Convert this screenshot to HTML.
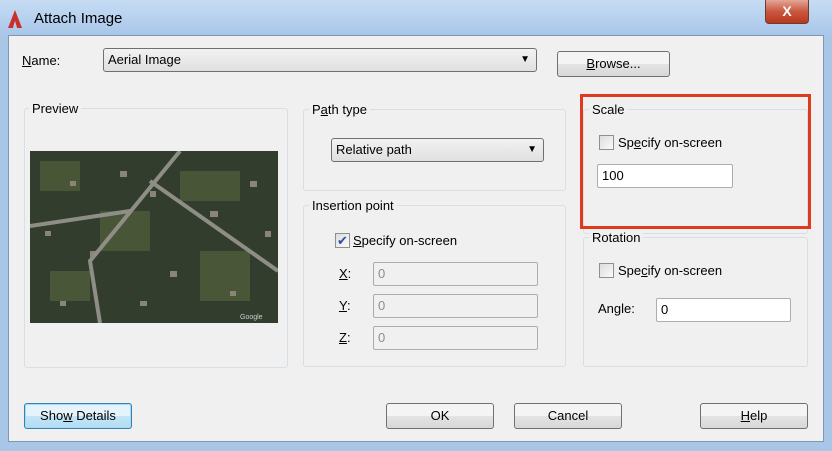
<!DOCTYPE html><html><head><style>
*{box-sizing:border-box}body{margin:0;width:832px;height:451px;overflow:hidden;background:#a9c6e6;font-family:"Liberation Sans",sans-serif;font-size:13px;color:#000;position:relative}
.a{position:absolute}
.title{left:0;top:0;width:832px;height:36px;background:linear-gradient(#c6dcf3,#b4cfee 60%,#a8c6e8)}
.inner{left:8px;top:35px;width:816px;height:407px;background:#f0f0f0;border:1px solid #7e98b6}
.grp{border:1px solid #d5dfe5;border-radius:3px}
.lbl{background:#f0f0f0;padding:0 3px}
.btn{border:1px solid #707070;border-radius:3px;background:linear-gradient(#f4f4f4 50%,#e4e4e4 50%,#d8d8d8);text-align:center;line-height:23px}
.cb{width:15px;height:15px;border:1px solid #8f8f8f;background:linear-gradient(135deg,#dcdcdc,#fbfbfb)}
.tb{background:#fff;border:1px solid #abadb3;border-radius:2px;padding-left:4px;line-height:26px}
.dis{background:#f0f0f0;border:1px solid #abadb3;color:#8d8d8d;border-radius:2px;padding-left:4px;line-height:26px}
.combo{border:1px solid #707070;border-radius:3px;background:linear-gradient(#f2f2f2,#e0e0e0);padding-left:4px}
u{text-decoration:underline}
</style></head><body>
<div class="a title"></div>
<div class="a" style="left:8px;top:10px;width:14px;height:18px;background:#c8302c;clip-path:polygon(50% 0,100% 100%,65% 100%,50% 60%,35% 100%,0 100%)"></div>
<div class="a" style="left:34px;top:10px;font-size:15px">Attach Image</div>
<div class="a" style="left:765px;top:0;width:44px;height:24px;border:1px solid #6d3a35;border-top:0;border-radius:0 0 4px 4px;background:linear-gradient(#e4a595,#c9573f 50%,#b8381e);color:#fff;font-weight:bold;text-align:center;line-height:22px;font-size:14px">X</div>
<div class="a inner"></div>
<div class="a" style="left:22px;top:53px"><u>N</u>ame:</div>
<div class="a combo" style="left:103px;top:48px;width:434px;height:24px;line-height:22px">Aerial Image<span style="position:absolute;right:6px;font-size:10px">▼</span></div>
<div class="a btn" style="left:557px;top:51px;width:113px;height:26px"><u>B</u>rowse...</div>

<div class="a grp" style="left:24px;top:108px;width:264px;height:260px"></div>
<div class="a lbl" style="left:29px;top:101px">Preview</div>
<svg class="a" style="left:30px;top:151px" width="248" height="172"><rect width="248" height="172" fill="#333d2e"/>
<g fill="#4f5c3a" opacity=".8"><rect x="10" y="10" width="40" height="30"/><rect x="70" y="60" width="50" height="40"/><rect x="150" y="20" width="60" height="30"/><rect x="170" y="100" width="50" height="50"/><rect x="20" y="120" width="40" height="30"/></g>
<g fill="#8b8478"><rect x="40" y="30" width="6" height="5"/><rect x="90" y="20" width="7" height="6"/><rect x="120" y="40" width="6" height="6"/><rect x="180" y="60" width="8" height="6"/><rect x="60" y="100" width="6" height="6"/><rect x="140" y="120" width="7" height="6"/><rect x="200" y="140" width="6" height="5"/><rect x="220" y="30" width="7" height="6"/><rect x="30" y="150" width="6" height="5"/><rect x="15" y="80" width="6" height="5"/><rect x="110" y="150" width="7" height="5"/><rect x="235" y="80" width="6" height="6"/></g>
<path d="M150 0 L60 110 L70 172 M0 75 L100 60 M120 30 L248 120" stroke="#8e8e86" stroke-width="4" fill="none"/>
<text x="210" y="168" font-size="7" fill="#ccc">Google</text></svg>

<div class="a grp" style="left:303px;top:109px;width:263px;height:82px"></div>
<div class="a lbl" style="left:309px;top:102px">P<u>a</u>th type</div>
<div class="a combo" style="left:331px;top:138px;width:213px;height:24px;line-height:22px">Relative path<span style="position:absolute;right:6px;font-size:10px">▼</span></div>

<div class="a grp" style="left:303px;top:205px;width:263px;height:162px"></div>
<div class="a lbl" style="left:309px;top:198px">Insertion point</div>
<div class="a cb" style="left:335px;top:233px;color:#2a4f9e;font-size:13px;line-height:13px;text-align:center">✔</div>
<div class="a" style="left:353px;top:233px"><u>S</u>pecify on-screen</div>
<div class="a" style="left:339px;top:266px"><u>X</u>:</div><div class="a dis" style="left:373px;top:262px;width:165px;height:24px;line-height:22px">0</div>
<div class="a" style="left:339px;top:298px"><u>Y</u>:</div><div class="a dis" style="left:373px;top:294px;width:165px;height:24px;line-height:22px">0</div>
<div class="a" style="left:339px;top:330px"><u>Z</u>:</div><div class="a dis" style="left:373px;top:326px;width:165px;height:24px;line-height:22px">0</div>

<div class="a grp" style="left:583px;top:109px;width:225px;height:125px"></div>
<div class="a lbl" style="left:589px;top:102px">Scale</div>
<div class="a" style="left:580px;top:94px;width:231px;height:135px;border:3px solid #e03a1e"></div>
<div class="a cb" style="left:599px;top:135px"></div>
<div class="a" style="left:618px;top:135px">Sp<u>e</u>cify on-screen</div>
<div class="a tb" style="left:597px;top:164px;width:136px;height:24px;line-height:22px">100</div>

<div class="a grp" style="left:583px;top:237px;width:225px;height:130px"></div>
<div class="a lbl" style="left:589px;top:230px">Rotation</div>
<div class="a cb" style="left:599px;top:263px"></div>
<div class="a" style="left:618px;top:263px">Spe<u>c</u>ify on-screen</div>
<div class="a" style="left:598px;top:301px">Angle:</div>
<div class="a tb" style="left:656px;top:298px;width:135px;height:24px;line-height:22px">0</div>

<div class="a btn" style="left:24px;top:403px;width:108px;height:26px;border-color:#3c7fb1;box-shadow:inset 0 0 0 1px #9fdcf5;background:linear-gradient(#e5f4fc 50%,#c4e5f6 50%,#b4dcf3)">Sho<u>w</u> Details</div>
<div class="a btn" style="left:386px;top:403px;width:108px;height:26px">OK</div>
<div class="a btn" style="left:514px;top:403px;width:108px;height:26px">Cancel</div>
<div class="a btn" style="left:700px;top:403px;width:108px;height:26px"><u>H</u>elp</div>
</body></html>
